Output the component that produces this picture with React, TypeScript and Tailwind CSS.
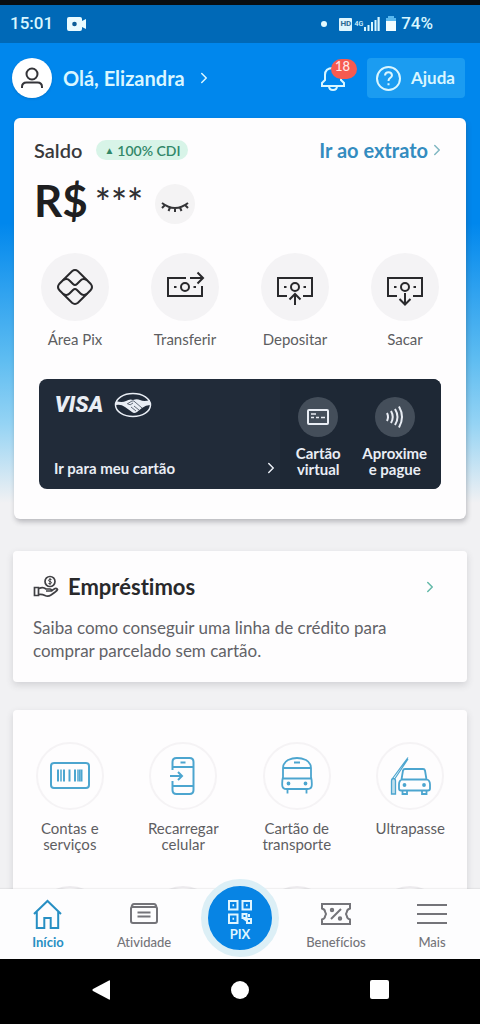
import type { ReactNode } from "react";
import { ChevronRight } from "lucide-react";

type IconProps = { children: ReactNode; box: string; className?: string; width?: number };

function Icon({ children, box, className = "", width = 2 }: IconProps) {
  return (
    <svg viewBox={box} className={className} fill="none" stroke="currentColor" strokeWidth={width} aria-hidden="true">
      {children}
    </svg>
  );
}

const pix = (
  <Icon box="0 0 40 40" className="size-10" width={2}>
    <path d="M17 4.200Q20 1.800 23 4.200L35.800 17Q38.200 20 35.800 23L23 35.800Q20 38.200 17 35.800L4.200 23Q1.800 20 4.200 17Z" />
    <path d="M8 13.200q4-2.400 6.500.3l3.500 3.500q2 2 4 0l3.500-3.500q2.500-2.700 6.500-.3M8 26.800q4 2.400 6.500-.3l3.500-3.500q2-2 4 0l3.500 3.500q2.500 2.700 6.500.3" />
  </Icon>
);

const billInside = (
  <>
    <circle cx="20" cy="20" r="4" />
    <path d="M9 20h2.500M28.500 20H31" />
  </>
);

const transfer = (
  <Icon box="0 0 40 40" className="size-10">
    <path d="M21 11H3v18h34V19M25 11h12.500M32.500 5.500L38 11l-5.500 5.500" />
    {billInside}
  </Icon>
);

const deposit = (
  <Icon box="0 0 40 40" className="size-10">
    <path d="M12 29H3V11h34v18h-9M20 38V28M14.500 32.500L20 27l5.500 5.500" />
    {billInside}
  </Icon>
);

const withdraw = (
  <Icon box="0 0 40 40" className="size-10">
    <path d="M12 29H3V11h34v18h-9M20 26v11M14.500 32l5.500 5.500 5.500-5.500" />
    {billInside}
  </Icon>
);

const barcode = (
  <Icon box="0 0 42 42" className="size-[42px]">
    <rect x="2" y="8" width="38" height="25" rx="3" />
    <path d="M9 14.500v12M15 14.500v12M20.500 14.500v12M26 14.500v12M32.500 14.500v12" strokeWidth="2" />
    <path d="M12 14.500v12M29 14.500v12M30.800 14.500v12" strokeWidth="1.500" />
  </Icon>
);

const phone = (
  <Icon box="0 0 42 42" className="size-[42px]">
    <path d="M10.500 15V7q0-4 4-4h13q4 0 4 4v28q0 4-4 4h-13q-4 0-4-4V26M10.500 12h21M10.500 31h21M18.500 7.500h5" />
    <path d="M8 21h12M16 17l4 4-4 4" />
  </Icon>
);

const train = (
  <Icon box="0 0 42 42" className="size-[42px]" width={1.8}>
    <path d="M7 13q0-5 5-8 9-4 18 0 5 3 5 8v9q.8 3 .8 6v2q0 4-4.300 4h-21q-4.300 0-4.300-4v-2q0-3 .8-6ZM7 13h28M6.500 23.500h29M18 7.500h6M11.500 34.500v4M30.500 34.500v4" />
    <circle cx="12.500" cy="28.500" r="1" />
    <circle cx="29.500" cy="28.500" r="1" />
  </Icon>
);

const tollCar = (
  <Icon box="0 0 42 42" className="size-[42px]" width={1.8}>
    <path d="M12.500 24.500l1.500-9q.3-1.500 2-1.500h18q1.700 0 2 1.500l1.500 9M13 24.500h25q3 1 3 5v4q0 2-2 2H12q-2 0-2-2v-4q0-4 3-5ZM13.500 35.500V39h4.500v-3.500M33 35.500V39h4.500v-3.500" />
    <path fill="currentColor" fillOpacity=".35" d="M2.500 39V26q0-2.500 2-2.500t2 2.500v13Z" strokeWidth="1.300" />
    <path d="M3.500 23.500L19 2.500M6 23.500L19 4" strokeWidth="1.200" />
    <circle cx="15.500" cy="30" r="1" />
    <circle cx="35" cy="30" r="1" />
  </Icon>
);

const actions = [
  { label: "Área Pix", icon: pix },
  { label: "Transferir", icon: transfer },
  { label: "Depositar", icon: deposit },
  { label: "Sacar", icon: withdraw },
];

const services = [
  { label: "Contas e serviços", icon: barcode },
  { label: "Recarregar celular", icon: phone },
  { label: "Cartão de transporte", icon: train },
  { label: "Ultrapasse", icon: tollCar },
];

function StatusBar() {
  return (
    <div className="flex h-[43px] shrink-0 items-center border-t-[5px] border-[#090e12] bg-[#0069b7] pr-[47px] pl-[10px] font-['Roboto',sans-serif] text-[17px] font-medium text-[#d8f6ff]">
      <span>15:01</span>
      <svg viewBox="0 0 20 16" className="ml-[14px] h-4 w-5" aria-hidden="true">
        <path fill="#e9fbff" d="M2 1h11q2 0 2 2v2l4-2v10l-4-2v2q0 2-2 2H2q-2 0-2-2V3q0-2 2-2Z" />
        <circle cx="7.500" cy="8" r="2.300" fill="#0b5d98" />
      </svg>
      <span className="ml-auto size-[6px] rounded-full bg-[#e4faff]" />
      <span className="ml-3 flex h-[13px] w-[13px] items-center justify-center rounded-[1px] bg-[#def6ff] text-[8px] font-bold text-[#2a6a93]">HD</span>
      <span className="ml-[2px] text-[7px] leading-none">4G</span>
      <svg viewBox="0 0 16 14" className="ml-px h-[14px] w-4" fill="#d8f6ff" aria-hidden="true">
        <path d="M0 10h2v4H0zM3.500 8h2v6h-2zM7 5h2v9H7zM10.500 3h2v11h-2zM13.500 0h2.200v14h-2.200z" />
      </svg>
      <svg viewBox="0 0 10 16" className="mr-[5px] ml-[6px] h-4 w-[10px]" aria-hidden="true">
        <path fill="#59b8ef" d="M2 0h6v2h2v3H0V2h2z" />
        <path fill="#f2fdff" d="M0 5h10v10H0z" />
      </svg>
      <span>74%</span>
    </div>
  );
}

function Header() {
  return (
    <header className="flex shrink-0 items-center pt-[15px] pr-[15px] pb-5 pl-3 text-[#d9f6ff]">
      <button className="flex items-center">
        <span className="flex size-10 items-center justify-center rounded-full bg-white text-[#343438] shadow">
          <Icon box="0 0 24 24" className="size-6">
            <circle cx="12" cy="8" r="5.500" />
            <path d="M2 22v-1q0-4.500 4.500-4.500h11q4.500 0 4.500 4.500v1" />
          </Icon>
        </span>
        <span className="ml-[11px] text-[20px] font-bold">Olá, Elizandra</span>
        <ChevronRight className="ml-[10px] size-[18px]" />
      </button>
      <button className="relative ml-auto h-10 w-[37px]" aria-label="18">
        <Icon box="0 0 26 26" className="absolute top-2 left-0 size-[26px]">
          <path d="M2 20v-3l3-3V9q0-7 8-7t8 7v5l3 3v3ZM9 20q0 4 4 4t4-4" />
        </Icon>
        <span className="absolute top-px right-0 flex h-5 w-[26px] items-center justify-center rounded-full bg-[#f65a50] pr-[3px] pb-1 text-[13px] font-medium text-[#ffe9e8]">18</span>
      </button>
      <button className="ml-[10px] flex h-10 items-center rounded bg-[#1b9cf1] pr-[10px] pl-[9px]">
        <Icon box="0 0 25 25" className="size-[25px]">
          <circle cx="12.500" cy="12.500" r="11.500" />
          <path d="M9 9.500q.3-3.200 3.500-3.200t3.500 3q0 1.700-2 2.900-1.500.9-1.500 2.800M12.500 17.200v2" />
        </Icon>
        <span className="ml-[10px] text-[17px] font-bold">Ajuda</span>
      </button>
    </header>
  );
}

function BalanceCard() {
  return (
    <section className="mx-[14px] rounded-md bg-[#fefdfe] pt-5 pb-[30px] shadow-[1px_3px_5px_rgba(60,60,70,0.3)]">
      <div className="flex h-6 items-center px-5">
        <h2 className="text-[20px] leading-6 font-semibold text-[#39393c]">Saldo</h2>
        <span className="ml-[14px] flex h-5 items-center rounded-full bg-[#d8f4e8] px-2 text-[14px] font-semibold text-[#318768]">
          <span className="mr-[3px] text-[10px]">▲</span>100% CDI
        </span>
        <a href="#extrato" className="ml-auto flex items-center text-[20px] leading-6 font-bold text-[#348cc0]">
          Ir ao extrato
          <ChevronRight className="size-[18px] text-[#80b7c2]" />
        </a>
      </div>
      <div className="flex h-[91px] items-center px-5 pb-4">
        <span className="text-[44px] leading-none font-bold text-[#1f1f21]">R$</span>
        <span className="ml-[7px] h-10 text-[38px] leading-[44px] font-medium text-[#303033]">***</span>
        <button aria-label="***" className="mt-2 ml-3 flex size-10 items-center justify-center rounded-full bg-[#f4f3f4] text-[#343437]">
          <Icon box="0 0 30 16" className="mt-2 h-4 w-[30px]">
            <path d="M2 3q13 10 26 0M5 5L2 8M10 7.500L8.500 11M15 8v4M20 7.500l1.500 3.500M25 5l3 3" />
          </Icon>
        </button>
      </div>
      <div className="grid grid-cols-4 px-[6px]">
        {actions.map((a) => (
          <button key={a.label} className="flex flex-col items-center text-[#29292c]">
            <span className="flex size-[68px] items-center justify-center rounded-full bg-[#f4f3f5]">{a.icon}</span>
            <span className="mt-2 text-[15px] leading-5 text-[#5d5d61]">{a.label}</span>
          </button>
        ))}
      </div>
      <CardBanner />
    </section>
  );
}

function CardBanner() {
  return (
    <div className="mx-[25px] mt-[30px] flex h-[110px] overflow-hidden rounded-lg bg-[#212b39] text-[#e9edf4]">
      <a href="#cartao" className="flex min-w-0 flex-1 flex-col justify-between pt-3 pb-[11px] pl-[15px]">
        <span className="flex items-center gap-[10px]">
          <span className="w-[50px] text-center font-['Roboto',sans-serif] text-[22px] leading-7 font-black italic">VISA</span>
          <svg viewBox="0 0 38 26" className="h-[26px] w-[38px]" fill="none" stroke="#e9edf4" aria-hidden="true">
            <ellipse cx="19" cy="13" rx="17.500" ry="11.500" strokeWidth="1.500" />
            <path fill="#e9edf4" stroke="none" d="M2 9Q8 11 12 9q4-2.500 7-1 4-1.500 7 0 4 2 10 0v5q-4 0-8 3l-5 4q-3 2-5 0l-7-5q-4-3-9-2Z" />
            <path stroke="#263040" strokeWidth=".7" d="M13 12l5-3q2-.5 3 1l7 6M20 14l5 4M17 15l5 4M14 12q2 2 5-1" />
          </svg>
        </span>
        <span className="flex items-center justify-between text-[15px] leading-5 font-bold">
          Ir para meu cartão
          <ChevronRight className="size-[18px]" />
        </span>
      </a>
      <div className="grid w-[161px] grid-cols-2 bg-[#1e2835] pr-2">
        <button className="flex flex-col items-center pt-[18px]">
          <span className="flex size-10 shrink-0 items-center justify-center rounded-full bg-[#444e5a]">
            <Icon box="0 0 22 18" className="h-[18px] w-[22px]" width={2}>
              <rect x="1" y="2" width="20" height="14" rx="1" />
              <path d="M4 6h5M4 9.500h3M9 9.500h3M14 9.500h4" strokeWidth="1.500" />
            </Icon>
          </span>
          <span className="mt-2 text-[15px] leading-4 font-bold">Cartão<br />virtual</span>
        </button>
        <button className="flex flex-col items-center pt-[18px]">
          <span className="flex size-10 shrink-0 items-center justify-center rounded-full bg-[#444e5a]">
            <Icon box="0 0 22 24" className="h-6 w-[22px]" width={2}>
              <path d="M3 8q2 4 0 8M7 6q3.500 6 0 12M11 4q5 8 0 16M15 1.500q6 10.500 0 21" />
            </Icon>
          </span>
          <span className="mt-2 text-[15px] leading-4 font-bold">Aproxime<br />e pague</span>
        </button>
      </div>
    </div>
  );
}

function LoanCard() {
  return (
    <a href="#emprestimos" className="mx-[13px] mt-8 block rounded bg-[#fefdfe] px-5 pt-6 pb-5 shadow-[0_3px_7px_rgba(60,60,70,0.17)]">
      <span className="flex items-center">
        <Icon box="0 0 26 24" className="h-6 w-[26px] text-[#404044]" width={1.7}>
          <circle cx="17" cy="6.500" r="5" />
          <path d="M18.500 4.500q-3-.8-3 .8 0 1 1.500 1.200t1.500 1.300q0 1.500-3 .7M17 3v7" strokeWidth="1" />
          <path d="M1.500 12.500h4v8h-4ZM6 13.500q4-2 7 .5h4q1.500 0 1.500 2H13M18 16l4-2.500q2-.5 2.500 1-1 2-6.500 5.500-3 2-6 .5-3-1.500-6-1" />
        </Icon>
        <span className="ml-[9px] text-[22px] leading-6 font-bold text-[#29292b]">Empréstimos</span>
        <ChevronRight className="mr-2 ml-auto size-[18px] text-[#63b9a8]" />
      </span>
      <span className="mt-[17px] block max-w-[400px] text-[17px] leading-[23px] text-[#626267]">
        Saiba como conseguir uma linha de crédito para comprar parcelado sem cartão.
      </span>
    </a>
  );
}

function ServicesCard() {
  return (
    <section className="mx-[13px] mt-7 rounded bg-[#fefdfe] pt-8 pb-8 shadow-[0_3px_7px_rgba(60,60,70,0.17)]">
      <div className="grid grid-cols-4">
        {services.map((s) => (
          <button key={s.label} className="flex flex-col items-center text-[#4ca5cf]">
            <span className="flex size-[68px] items-center justify-center rounded-full border-2 border-[#f5f3f5]">{s.icon}</span>
            <span className="mt-[10px] w-[76px] text-center text-[15px] leading-4 text-[#5e5e62]">{s.label}</span>
          </button>
        ))}
      </div>
      <div className="mt-[34px] grid grid-cols-4 justify-items-center" aria-hidden="true">
        {services.map((s) => (
          <span key={s.label} className="size-[68px] rounded-full border-2 border-[#eeecef]" />
        ))}
      </div>
    </section>
  );
}

function TabBar() {
  const tab = "flex flex-col items-center pt-2 text-[13px] leading-4 font-medium text-[#747479]";
  return (
    <nav className="relative grid h-[70px] shrink-0 grid-cols-5 bg-[#fdfdfe] shadow-[0_-1px_1px_rgba(0,0,0,0.05)]">
      <button className={tab}>
        <Icon box="0 0 32 34" className="h-[34px] w-8 text-[#278fc3]" width={2}>
          <path d="M2 17L15.500 4 29 17M4.800 14.500v16.500h7.500V21h6.400v10h7.500V14.500" />
        </Icon>
        <span className="mt-[3px] font-bold text-[#278fc3]">Início</span>
      </button>
      <button className={tab}>
        <Icon box="0 0 32 34" className="h-[34px] w-8">
          <path d="M4.500 10h23q1.500 0 1.500 1.500V24q0 2-2 2H5q-2 0-2-2V11.500Q3 10 4.500 10ZM3.500 10.500Q4 7 6 7h20q2 0 2.500 3.500M9.500 15.500h13M9.500 19.500h13" />
        </Icon>
        <span className="mt-[3px]">Atividade</span>
      </button>
      <div className="flex justify-center">
        <button className="-mt-[10px] flex size-[78px] flex-col items-center rounded-full border-[7px] border-[#dceff6] bg-[#0784e4] pt-[13px] text-[13px] leading-[18px] font-bold text-[#dff5ff]">
          <Icon box="0 0 26 26" className="size-[26px] shrink-0">
            <path d="M2 2h8.500v8.500H2ZM15.500 2H24v8.500h-8.500ZM2 15.500h8.500V24H2Z" />
            <path d="M5.500 6.300h1.600M19 6.300h1.600M5.500 19.800h1.600" />
            <path d="M15.500 15h4v4h-4ZM20 20h4v4h-4ZM22 15v3M16 19l4 3" />
          </Icon>
          PIX
        </button>
      </div>
      <button className={tab}>
        <Icon box="0 0 32 34" className="h-[34px] w-8">
          <path d="M2 7h28v4.500q-3 1-3 3l-1 2.500 1 2.500q0 2 3 3V27H2v-4.500q3-1 3-3L6 17l-1-2.500q0-2-3-3ZM21 12L11 22" />
          <circle cx="12" cy="13" r="1.200" />
          <circle cx="20" cy="21.500" r="1.200" />
        </Icon>
        <span className="mt-[3px]">Benefícios</span>
      </button>
      <button className={tab}>
        <Icon box="0 0 32 34" className="h-[34px] w-8">
          <path d="M1 8h30M1 17h30M1 26h30" />
        </Icon>
        <span className="mt-[3px]">Mais</span>
      </button>
    </nav>
  );
}

function SystemBar() {
  return (
    <div className="grid h-[65px] shrink-0 grid-cols-[repeat(3,139px)] items-center justify-center justify-items-center bg-black pb-1" aria-hidden="true">
      <svg viewBox="0 0 20 20" className="size-5" fill="white"><path d="M19 1v18q0 1-1 .5L2 11q-1.500-1 0-2L18 .5q1-.5 1 .5Z" /></svg>
      <span className="size-[18px] rounded-full bg-white" />
      <span className="size-[19px] rounded-[2px] bg-white" />
    </div>
  );
}

export default function App() {
  return (
    <div className="flex h-screen flex-col overflow-hidden bg-[#f1f1f3] font-['Lato',sans-serif] [font-variant-ligatures:none]">
      <StatusBar />
      <main className="min-h-0 flex-1 overflow-y-auto bg-[linear-gradient(to_bottom,#0087ed_0px,#0087ed_180px,#5dbcf1_315px,#94d3f4_380px,#f1f1f3_460px)] [scrollbar-width:none]">
        <Header />
        <BalanceCard />
        <LoanCard />
        <ServicesCard />
      </main>
      <TabBar />
      <SystemBar />
    </div>
  );
}
